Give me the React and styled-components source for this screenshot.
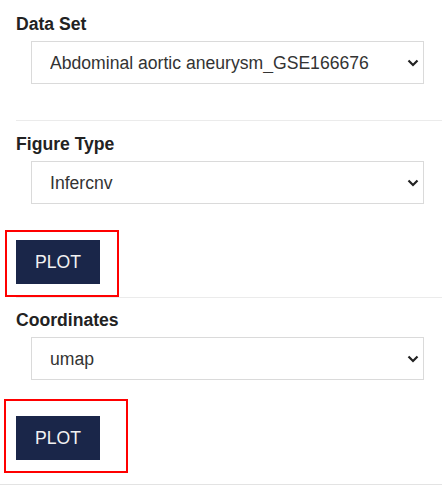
import styled, { createGlobalStyle } from "styled-components";

const GlobalStyle = createGlobalStyle`
  body {
    margin: 0;
    background: #fff;
    font-family: "Liberation Sans", Arial, sans-serif;
  }
`;

const fields = [
  { label: "Data Set", value: "Abdominal aortic aneurysm_GSE166676" },
  { label: "Figure Type", value: "Infercnv" },
  { label: "Coordinates", value: "umap" },
];

export default function App() {
  return (
    <>
      <GlobalStyle />
      <Panel>
        <Section $top={14} $bottom={36}>
          <Field {...fields[0]} />
        </Section>
        <Section $top={13} $bottom={13}>
          <Field {...fields[1]} />
          <PlotButton mark={{ top: -10, left: -11, right: -19, bottom: -13 }} />
        </Section>
      </Panel>
      <LastSection>
        <Field {...fields[2]} />
        <PlotButton mark={{ top: -17, left: -12, right: -28, bottom: -13 }} />
      </LastSection>
    </>
  );
}

function Field({ label, value }) {
  return (
    <>
      <Label>{label}</Label>
      <SelectWrap>
        <Select defaultValue={value}>
          <option>{value}</option>
        </Select>
        <Chevron width="12" height="8" viewBox="0 0 12 8">
          <polyline points="1.5,1.5 6,6 10.5,1.5" />
        </Chevron>
      </SelectWrap>
    </>
  );
}

function PlotButton({ mark }) {
  return (
    <ButtonWrap>
      <Button>PLOT</Button>
      <Mark style={mark} />
    </ButtonWrap>
  );
}

const Panel = styled.div`
  margin-left: 16px;
`;

const Section = styled.div`
  padding: ${(p) => p.$top}px 0 ${(p) => p.$bottom}px;
  border-bottom: 1px solid #ebebeb;
`;

const LastSection = styled.div`
  padding: 12px 0 24px 16px;
  border-bottom: 1px solid #e3e3e3;
`;

const Label = styled.div`
  font-size: 17.6px;
  font-weight: 700;
  line-height: 20px;
  color: #222;
  margin-bottom: 7px;
`;

const SelectWrap = styled.div`
  position: relative;
  margin-left: 15px;
  width: 393px;
`;

const Select = styled.select`
  appearance: none;
  display: block;
  width: 100%;
  height: 43px;
  margin: 0;
  padding: 0 30px 0 18px;
  border: 1px solid #dadada;
  border-radius: 0;
  background: #fff;
  font-family: "Liberation Sans", Arial, sans-serif;
  font-size: 17.6px;
  color: #333;
  outline: none;
`;

const Chevron = styled.svg`
  position: absolute;
  right: 5px;
  top: 18px;
  pointer-events: none;
  fill: none;
  stroke: #222;
  stroke-width: 2.2;
`;

const ButtonWrap = styled.div`
  position: relative;
  display: inline-block;
  margin-top: 36px;
  vertical-align: top;
`;

const Button = styled.button`
  display: block;
  width: 84px;
  height: 44px;
  padding: 0;
  border: none;
  border-radius: 0;
  background: #1a2649;
  color: #f2f2f2;
  font-family: "Liberation Sans", Arial, sans-serif;
  font-size: 17.6px;
  cursor: pointer;
`;

const Mark = styled.div`
  position: absolute;
  border: 2px solid #ff0000;
  pointer-events: none;
`;
